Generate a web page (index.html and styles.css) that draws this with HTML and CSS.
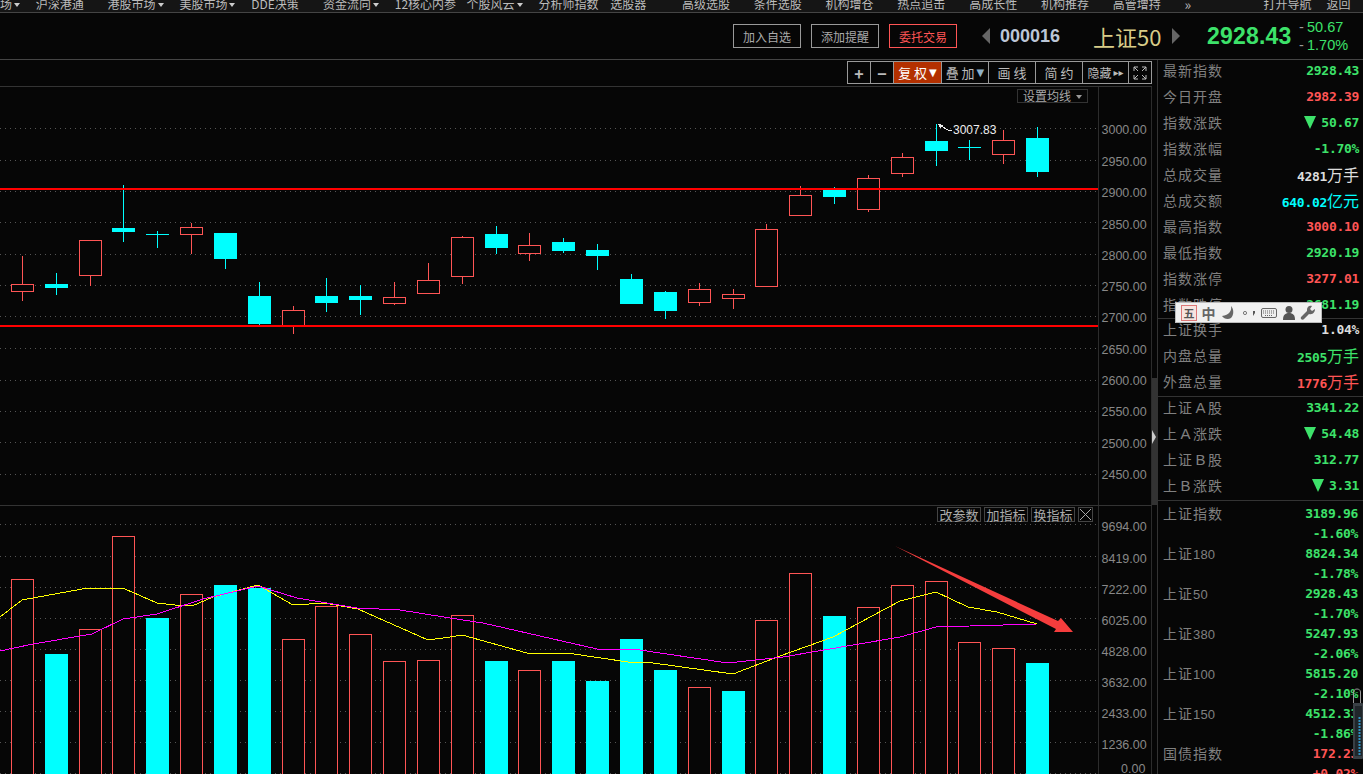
FILE: index.html
```html
<!DOCTYPE html>
<html lang="zh-CN">
<head>
    <meta charset="UTF-8">
    <title>上证50</title>
    <link rel="stylesheet" href="styles.css">
</head>
<body>
    <!-- top menu, cut off by the window edge -->
    <div class="topnav">
        <div class="nav-items">
            <span class="nav-item">股票市场<i class="caret"></i></span>
            <span class="nav-item">沪深港通</span>
            <span class="nav-item">港股市场<i class="caret"></i></span>
            <span class="nav-item">美股市场<i class="caret"></i></span>
            <span class="nav-item">DDE决策</span>
            <span class="nav-item">资金流向<i class="caret"></i></span>
            <span class="nav-item">12核心内参</span>
            <span class="nav-item">个股风云<i class="caret"></i></span>
            <span class="nav-item">分析师指数</span>
            <span class="nav-item">选股器</span>
            <span class="nav-item">高级选股</span>
            <span class="nav-item">条件选股</span>
            <span class="nav-item">机构增仓</span>
            <span class="nav-item">热点追击</span>
            <span class="nav-item">高成长性</span>
            <span class="nav-item">机构推荐</span>
            <span class="nav-item">高管增持</span>
            <span class="nav-more">»</span>
            <span class="nav-right">打开导航</span>
            <span class="nav-back">返回</span>
        </div>
    </div>

    <div class="quotebar">
        <button class="qbtn">加入自选</button>
        <button class="qbtn">添加提醒</button>
        <button class="qbtn qbtn-trade">委托交易</button>
        <i class="arrow-left"></i>
        <span class="code">000016</span>
        <span class="name">上证50</span>
        <i class="arrow-right"></i>
        <span class="price">2928.43</span>
        <div class="change">
            <span><b>-</b>50.67</span>
            <span><b>-</b>1.70%</span>
        </div>
    </div>

    <div class="main">
        <div class="charts">
            <div class="toolbar">
                <div class="tools">
                    <span class="tool tool-sq">+</span>
                    <span class="tool tool-sq">−</span>
                    <span class="tool tool-on">复 权<em>▼</em></span>
                    <span class="tool">叠 加<em class="tri-blue">▼</em></span>
                    <span class="tool">画 线</span>
                    <span class="tool">简 约</span>
                    <span class="tool tool-hide">隐藏<em>▸▸</em></span>
                    <span class="tool tool-full">
                        <svg width="14" height="14" viewBox="0 0 14 14">
                            <path d="M1 5V1h4M9 1h4v4M13 9v4H9M5 13H1V9M1 1l4 4M13 1L9 5M13 13L9 9M1 13l4-4" fill="none" stroke="#bbb"/>
                        </svg>
                    </span>
                </div>
            </div>

            <div class="panel panel-price">
                <svg id="priceChart" class="chart" width="1152" height="418" viewBox="0 87 1152 418"></svg>
                <span class="ma-btn">设置均线<i class="caret"></i></span>
            </div>

            <div class="panel panel-vol">
                <svg id="volChart" class="chart" width="1152" height="268" viewBox="0 506 1152 268"></svg>
                <div class="vol-btns">
                    <span class="vol-btn">改参数</span>
                    <span class="vol-btn">加指标</span>
                    <span class="vol-btn">换指标</span>
                    <span class="vol-btn vol-close">
                        <svg width="11" height="11" viewBox="0 0 11 11"><path d="M0 0l11 11M11 0L0 11" stroke="#aaa"/></svg>
                    </span>
                </div>
            </div>
        </div>

        <div class="splitter">
            <div class="split-thumb"><i class="split-handle"></i></div>
        </div>

        <div class="side">
            <div class="side-group group-a">
                <div class="row"><span class="lbl">最新指数</span><span class="val g">2928.43</span></div>
                <div class="row"><span class="lbl">今日开盘</span><span class="val r">2982.39</span></div>
                <div class="row"><span class="lbl">指数涨跌</span><span class="val g"><i class="down"></i>50.67</span></div>
                <div class="row"><span class="lbl">指数涨幅</span><span class="val g">-1.70%</span></div>
                <div class="row"><span class="lbl">总成交量</span><span class="val w">4281<small>万手</small></span></div>
                <div class="row"><span class="lbl">总成交额</span><span class="val c">640.02<small>亿元</small></span></div>
                <div class="row"><span class="lbl">最高指数</span><span class="val r">3000.10</span></div>
                <div class="row"><span class="lbl">最低指数</span><span class="val g">2920.19</span></div>
                <div class="row"><span class="lbl">指数涨停</span><span class="val r">3277.01</span></div>
                <div class="row"><span class="lbl">指数跌停</span><span class="val g">2681.19</span></div>
            </div>
            <div class="side-group group-b">
                <div class="row"><span class="lbl">上证换手</span><span class="val w">1.04%</span></div>
                <div class="row"><span class="lbl">内盘总量</span><span class="val g">2505<small>万手</small></span></div>
                <div class="row"><span class="lbl">外盘总量</span><span class="val r">1776<small>万手</small></span></div>
            </div>
            <div class="side-group group-c">
                <div class="row"><span class="lbl">上证<i class="ch">A</i>股</span><span class="val g">3341.22</span></div>
                <div class="row"><span class="lbl">上<i class="ch">A</i>涨跌</span><span class="val g"><i class="down"></i>54.48</span></div>
                <div class="row"><span class="lbl">上证<i class="ch">B</i>股</span><span class="val g">312.77</span></div>
                <div class="row"><span class="lbl">上<i class="ch">B</i>涨跌</span><span class="val g"><i class="down"></i>3.31</span></div>
            </div>
            <div class="group-d">
                <div class="row-sm"><span class="lbl">上证指数</span><span class="val g">3189.96</span></div>
                <div class="row-sm row-pct"><span class="val g">-1.60%</span></div>
                <div class="row-sm"><span class="lbl">上证<i class="dg">180</i></span><span class="val g">8824.34</span></div>
                <div class="row-sm row-pct"><span class="val g">-1.78%</span></div>
                <div class="row-sm"><span class="lbl">上证<i class="dg">50</i></span><span class="val g">2928.43</span></div>
                <div class="row-sm row-pct"><span class="val g">-1.70%</span></div>
                <div class="row-sm"><span class="lbl">上证<i class="dg">380</i></span><span class="val g">5247.93</span></div>
                <div class="row-sm row-pct"><span class="val g">-2.06%</span></div>
                <div class="row-sm"><span class="lbl">上证<i class="dg">100</i></span><span class="val g">5815.20</span></div>
                <div class="row-sm row-pct"><span class="val g">-2.10%</span></div>
                <div class="row-sm"><span class="lbl">上证<i class="dg">150</i></span><span class="val g">4512.33</span></div>
                <div class="row-sm row-pct"><span class="val g">-1.86%</span></div>
                <div class="row-sm"><span class="lbl">国债指数</span><span class="val r">172.23</span></div>
                <div class="row-sm row-pct"><span class="val r">+0.02%</span></div>
            </div>
        </div>
    </div>

    <!-- input method bar floating over the sidebar -->
    <div class="ime">
        <span class="ime-wu">五</span>
        <span class="ime-zh">中</span>
        <svg width="16" height="16" viewBox="0 0 16 16"><path d="M11 1c1 5-2 9-9 10 2 3 6 4 9 2 3-3 3-9 0-12z" fill="#666"/></svg>
        <svg width="16" height="16" viewBox="0 0 16 16"><circle cx="4" cy="8" r="1.6" fill="none" stroke="#777"/><path d="M12 6h2v2l-2 3z" fill="#555"/></svg>
        <svg width="16" height="14" viewBox="0 0 16 14"><rect x="0.5" y="2.500" width="15" height="9" rx="1.5" fill="#eee" stroke="#666"/><path d="M2 5h12M2 7h12M4 9.500h8" stroke="#666" stroke-dasharray="1 1"/></svg>
        <svg width="14" height="16" viewBox="0 0 14 16"><circle cx="7" cy="4.500" r="3.500" fill="#555"/><path d="M1 15c0-5 2-7 6-7s6 2 6 7z" fill="#555"/></svg>
        <svg width="16" height="16" viewBox="0 0 16 16"><path d="M15 4l-3 2-2-2 2-3c-3-1-5 1-5 4v1L1 12c-1 2 1 3 2.500 2.500L9 9c4 1 6-2 6-5z" fill="#666"/></svg>
    </div>

    <!-- floating volume widget in the corner -->
    <svg class="clip" width="11" height="74" viewBox="0 0 11 74">
        <path d="M1.500 16V5c0-4 7-4 7 0v11" fill="none" stroke="#999"/>
        <rect x="1" y="16" width="10" height="56" rx="1" fill="#394045"/>
        <rect x="3" y="19" width="7" height="50" fill="#20262a"/>
        <path d="M7.500 30V68" stroke="#2f8fc0" stroke-width="2" stroke-dasharray="2 1"/>
    </svg>

    <script src="chart.js"></script>
</body>
</html>
```

FILE: styles.css
```css
/* Page base */
body {
    margin: 0;
    height: 774px;
    overflow: hidden;
    background-color: #060606;
    color: #bbb;
    font-family: "Liberation Sans", "Noto Sans CJK SC", sans-serif;
    position: relative;
}

i, em {
    font-style: normal;
}

/* Top menu */
.topnav {
    height: 12px;
    background-color: #151515;
    border-bottom: 1px solid #444;
    overflow: hidden;
}

.nav-items {
    display: flex;
    margin: -4px 0 0 -36px;
    font-family: "Noto Sans CJK SC", sans-serif;
    font-size: 12px;
    line-height: 16px;
    white-space: nowrap;
}

.nav-item {
    flex: 0 0 71.8px;
}

.nav-more {
    flex: 0 0 79px;
    font-size: 14px;
}

.nav-right {
    flex: 0 0 63px;
}

.caret {
    display: inline-block;
    margin-left: 2px;
    vertical-align: 2px;
    border-left: 3px solid transparent;
    border-right: 3px solid transparent;
    border-top: 4px solid #ccc;
}

/* Quote bar */
.quotebar {
    height: 46px;
    border-bottom: 1px solid #444;
    display: flex;
    align-items: center;
    padding-left: 733px;
}

.qbtn {
    width: 68px;
    height: 24px;
    margin: 0 10px 0 0;
    padding: 0;
    background: none;
    border: 1px solid #999;
    color: #aaa;
    font-family: "Noto Sans CJK SC", sans-serif;
    font-size: 12px;
}

.qbtn-trade {
    border-color: #ff5555;
    color: #ff5555;
    margin-right: 25px;
}

.arrow-left, .arrow-right {
    border-top: 8px solid transparent;
    border-bottom: 8px solid transparent;
}

.arrow-left {
    border-right: 8px solid #666;
    margin-right: 10px;
}

.arrow-right {
    border-left: 8px solid #666;
    margin: 0 27px 0 11px;
}

.code {
    width: 93px;
    font-size: 18px;
    font-weight: bold;
    color: #bcc6d6;
}

.name {
    width: 68px;
    font-family: "Noto Sans CJK SC", sans-serif;
    font-size: 22px;
    color: #d8cc88;
    white-space: nowrap;
}

.price {
    width: 92px;
    font-size: 23px;
    font-weight: bold;
    letter-spacing: 0.2px;
    color: #3de26a;
}

.change {
    display: flex;
    flex-direction: column;
    font-size: 14.5px;
    line-height: 18px;
    color: #3de26a;
}

.change b {
    display: inline-block;
    width: 8px;
    font-weight: normal;
    color: #999;
}

/* Main area */
.main {
    display: flex;
    height: 714px;
}

.charts {
    width: 1152px;
    flex: none;
}

.toolbar {
    height: 27px;
    border-bottom: 1px solid #333;
    display: flex;
    justify-content: flex-end;
    padding-top: 1px;
    box-sizing: border-box;
}

.tools {
    display: flex;
    height: 23px;
    border: 1px solid #999;
    box-sizing: border-box;
    font-family: "Noto Sans CJK SC", sans-serif;
    font-size: 13px;
    color: #bbb;
}

.tool {
    width: 47px;
    box-sizing: border-box;
    display: flex;
    align-items: center;
    justify-content: center;
    border-right: 1px solid #999;
    white-space: nowrap;
}

.tool em {
    font-family: "DejaVu Sans", sans-serif;
    font-size: 10px;
    margin-left: 2px;
}

.tool-sq {
    width: 23px;
    font-size: 16px;
    font-weight: bold;
}

.tool-on {
    width: 48px;
    background-color: #b33000;
    color: #fff;
}

.tool-hide {
    width: 46px;
    font-size: 12px;
}

.tool-full {
    width: 22px;
    border-right: none;
}

.tri-blue {
    color: #8fb0c8;
}

/* Chart panels */
.panel {
    position: relative;
}

.panel-price {
    height: 418px;
    border-bottom: 1px solid #333;
}

.panel-vol {
    height: 268px;
}

.chart {
    display: block;
    shape-rendering: crispEdges;
}

.chart .frame { stroke: #2c2c2c; }
.chart .grid { stroke: #555; stroke-dasharray: 1 4; }
.chart .level { stroke: #f00; stroke-width: 2; }
.chart .wick-up { stroke: #ff5555; }
.chart .wick-down { stroke: #00ffff; }
.chart .body-up { fill: #060606; stroke: #ff5555; }
.chart .body-down { fill: #00ffff; }
.chart .ma5 { fill: none; stroke: #ffff00; }
.chart .ma10 { fill: none; stroke: #ff00ff; }
.chart .axis { fill: #888; font-size: 12.5px; }
.chart .note { fill: #eee; font-size: 12px; }
.chart .note-line { stroke: #eee; fill: none; }
.chart .note-tip { fill: #eee; }
.chart .mark { fill: #f53d3d; shape-rendering: auto; }

.ma-btn {
    position: absolute;
    left: 1017px;
    top: 2px;
    width: 71px;
    height: 14px;
    border: 1px solid #333;
    box-sizing: border-box;
    font-family: "Noto Sans CJK SC", sans-serif;
    font-size: 12px;
    line-height: 12px;
    text-align: center;
    color: #aaa;
    background-color: #060606;
}

.ma-btn .caret {
    margin-left: 5px;
    border-top-color: #999;
}

.vol-btns {
    position: absolute;
    left: 937px;
    top: 1px;
    display: flex;
    gap: 3px;
}

.vol-btn {
    width: 44px;
    height: 15px;
    border: 1px solid #444;
    box-sizing: border-box;
    font-family: "Noto Sans CJK SC", sans-serif;
    font-size: 13px;
    line-height: 13px;
    text-align: center;
    color: #aaa;
}

.vol-close {
    width: 15px;
    padding: 1px;
    line-height: 0;
}

/* Strip between chart and sidebar */
.splitter {
    width: 5px;
    flex: none;
    padding-top: 318px;
    box-sizing: border-box;
}

.split-thumb {
    height: 127px;
    background-color: #333;
    padding-top: 52px;
    box-sizing: border-box;
}

.split-handle {
    display: block;
    width: 0;
    border-top: 7px solid transparent;
    border-bottom: 7px solid transparent;
    border-left: 4px solid #ccc;
}

/* Sidebar */
.side {
    width: 206px;
    flex: none;
    box-sizing: border-box;
    border-left: 1px solid #333;
}

.side-group {
    border-bottom: 1px solid #333;
    margin-top: -3px;
}

.group-a { height: 261px; }
.group-b { height: 80px; }
.group-c { height: 106px; }

.group-d {
    margin-top: 2px;
}

.row, .row-sm {
    display: flex;
    justify-content: space-between;
    align-items: center;
    padding: 0 4px 0 5px;
    white-space: nowrap;
}

.row {
    height: 26px;
}

.row-sm {
    height: 20px;
    padding-right: 5px;
}

.row-pct {
    justify-content: flex-end;
}

.lbl {
    font-family: "Noto Sans CJK SC", sans-serif;
    font-size: 14px;
    letter-spacing: 1px;
    color: #808080;
}

/* latin letter in a label takes one full character cell */
.ch {
    display: inline-block;
    width: 15px;
    font-family: "Liberation Sans", sans-serif;
    font-size: 15px;
    letter-spacing: 0;
    text-align: center;
}

.dg {
    font-family: "Liberation Sans", sans-serif;
    font-size: 13px;
    letter-spacing: 0.2px;
}

.val {
    font-family: "DejaVu Sans Mono", monospace;
    font-size: 13px;
    letter-spacing: -0.3px;
    font-weight: bold;
}

.val small {
    font-family: "Noto Sans CJK SC", sans-serif;
    font-size: 16px;
    letter-spacing: 0;
    font-weight: normal;
}

.g { color: #3de26a; }
.r { color: #ff5555; }
.w { color: #ddd; }
.c { color: #00ffff; }

.down {
    display: inline-block;
    margin-right: 5px;
    vertical-align: -2px;
    border-left: 6px solid transparent;
    border-right: 6px solid transparent;
    border-top: 13px solid #3de26a;
}

/* Input method bar */
.ime {
    position: absolute;
    left: 1175px;
    top: 302px;
    width: 147px;
    height: 21px;
    box-sizing: border-box;
    padding: 0 5px;
    display: flex;
    align-items: center;
    justify-content: space-between;
    background-color: #f0f0f0;
    border: 1px solid #bbb;
}

.ime-wu {
    width: 14px;
    height: 14px;
    border: 1px solid #d77;
    background-color: #f6e4e0;
    font-family: "Noto Sans CJK SC", sans-serif;
    font-size: 11px;
    font-weight: bold;
    line-height: 14px;
    text-align: center;
    color: #555;
}

.ime-zh {
    font-family: "Noto Sans CJK SC", sans-serif;
    font-size: 14px;
    font-weight: bold;
    line-height: 16px;
    color: #666;
}

.clip {
    position: absolute;
    left: 1352px;
    top: 687px;
}
```

FILE: chart.js
```js
// x centre of each trading day
const days = [22.5, 56.5, 90.5, 123.5, 157.5, 191.5, 225.5, 259.5, 293.5, 326.5, 360.5,
    394.5, 428.5, 462.5, 496.5, 529.5, 563.5, 597.5, 631.5, 665.5, 699.5, 733.5, 766.5,
    800.5, 834.5, 868.5, 902.5, 936.5, 969.5, 1003.5, 1037.5];

// pixel rows: wick top, wick bottom, body top, body bottom, up (red) or not
const candles = [
    [256, 301, 284, 292, 1], [273, 295, 284, 288, 0], [240, 286, 240, 276, 1],
    [185, 242, 228, 232, 0], [231, 248, 234, 235, 0], [223, 254, 227, 235, 1],
    [233, 269, 233, 259, 0], [282, 325, 296, 324, 0], [306, 334, 310, 326, 1],
    [278, 312, 296, 303, 0], [285, 315, 296, 300, 0], [282, 305, 297, 304, 1],
    [263, 294, 280, 294, 1], [236, 284, 237, 277, 1], [226, 254, 234, 248, 0],
    [233, 261, 245, 254, 1], [238, 253, 242, 251, 0], [244, 270, 250, 256, 0],
    [274, 304, 279, 304, 0], [291, 319, 292, 311, 0], [283, 306, 289, 303, 1],
    [289, 309, 294, 299, 1], [224, 287, 229, 287, 1], [186, 216, 195, 216, 1],
    [187, 204, 190, 197, 0], [175, 212, 178, 210, 1], [153, 177, 157, 174, 1],
    [124, 166, 141, 151, 0], [140, 160, 147, 148, 0], [130, 164, 140, 155, 1],
    [127, 177, 138, 172, 0]
];

// volume bars: top row, up (red) or not
const volumes = [
    [579, 1], [654, 0], [629, 1], [536, 1], [618, 0], [594, 1], [585, 0], [588, 0],
    [639, 1], [606, 1], [634, 1], [661, 1], [660, 1], [615, 1], [661, 0], [670, 1],
    [661, 0], [681, 0], [639, 0], [670, 0], [687, 1], [691, 0], [620, 1], [573, 1],
    [616, 0], [607, 1], [585, 1], [581, 1], [642, 1], [648, 1], [663, 0]
];

const ma5 = [[0, 617], [22, 600], [33, 598], [88, 588], [98, 588], [125, 589], [157, 603],
    [175, 605], [192, 606], [213, 597], [258, 585], [293, 605], [325, 603], [358, 609],
    [428, 640], [450, 637], [462, 635], [527, 653], [567, 653], [628, 662], [653, 663],
    [733, 674], [780, 656], [833, 637], [900, 601], [936, 592], [968, 607], [997, 612],
    [1037, 624]];

const ma10 = [[0, 651], [33, 644], [92, 634], [123, 619], [157, 614], [203, 599], [258, 586],
    [297, 598], [357, 608], [400, 610], [450, 618], [483, 623], [597, 649], [633, 649],
    [728, 663], [783, 657], [900, 637], [936, 627], [1037, 624]];

const priceAxis = [
    ['3000.00', 129], ['2950.00', 161], ['2900.00', 192], ['2850.00', 224], ['2800.00', 255],
    ['2750.00', 286], ['2700.00', 317], ['2650.00', 349], ['2600.00', 380], ['2550.00', 411],
    ['2500.00', 443], ['2450.00', 474]
];
const priceGrid = [128, 160, 191, 222, 254, 285, 316, 348, 380, 411, 442, 474];

const volAxis = [
    ['9694.00', 526], ['8419.00', 558], ['7222.00', 589], ['6025.00', 620], ['4828.00', 651],
    ['3632.00', 682], ['2433.00', 713], ['1236.00', 744], ['0.00', 768]
];
const volGrid = [524, 556, 587, 618, 649, 680, 711, 742, 773];

const NS = 'http://www.w3.org/2000/svg';

function add(svg, tag, cls, attrs, text) {
    const el = document.createElementNS(NS, tag);
    el.setAttribute('class', cls);
    for (const key in attrs) {
        el.setAttribute(key, attrs[key]);
    }
    if (text) el.textContent = text;
    svg.appendChild(el);
}

function drawFrame(svg, top, bottom, grid, axis) {
    add(svg, 'line', 'frame', { x1: 1098.5, y1: top, x2: 1098.5, y2: bottom });
    add(svg, 'line', 'frame', { x1: 1151.5, y1: top, x2: 1151.5, y2: bottom });
    grid.forEach(y => {
        add(svg, 'line', 'grid', { x1: 0, y1: y + 0.5, x2: 1098, y2: y + 0.5 });
    });
    axis.forEach(([label, y]) => {
        const x = label === '0.00' ? 1121 : 1101.5;
        add(svg, 'text', 'axis', { x: x, y: y + 4.5 }, label);
    });
}

function drawPrice(svg) {
    drawFrame(svg, 87, 505, priceGrid, priceAxis);

    candles.forEach(([hi, lo, top, bottom, up], i) => {
        const x = days[i];
        add(svg, 'line', up ? 'wick-up' : 'wick-down', { x1: x, y1: hi, x2: x, y2: lo });
        if (up) {
            add(svg, 'rect', 'body-up', { x: x - 11, y: top + 0.5, width: 22, height: bottom - top - 1 });
        } else {
            add(svg, 'rect', 'body-down', { x: x - 11.5, y: top, width: 23, height: bottom - top });
        }
    });

    add(svg, 'line', 'level', { x1: 0, y1: 189, x2: 1098, y2: 189 });
    add(svg, 'line', 'level', { x1: 0, y1: 326, x2: 1098, y2: 326 });

    add(svg, 'polygon', 'note-tip', { points: '938,124 944,125 940,128' });
    add(svg, 'polyline', 'note-line', { points: '941,126 948,130 952,130' });
    add(svg, 'text', 'note', { x: 953, y: 134 }, '3007.83');
}

function drawVolume(svg) {
    drawFrame(svg, 506, 774, volGrid, volAxis);

    volumes.forEach(([top, up], i) => {
        const x = days[i];
        if (up) {
            add(svg, 'rect', 'body-up', { x: x - 11, y: top + 0.5, width: 22, height: 780 - top });
        } else {
            add(svg, 'rect', 'body-down', { x: x - 11.5, y: top, width: 23, height: 780 - top });
        }
    });

    add(svg, 'polyline', 'ma5', { points: ma5.join(' ') });
    add(svg, 'polyline', 'ma10', { points: ma10.join(' ') });

    // hand-drawn red arrow on the screenshot
    add(svg, 'polygon', 'mark', { points: '895,546 1058,621 1061,618 1073,632 1054,632 1056,629' });
}

drawPrice(document.getElementById('priceChart'));
drawVolume(document.getElementById('volChart'));
```
